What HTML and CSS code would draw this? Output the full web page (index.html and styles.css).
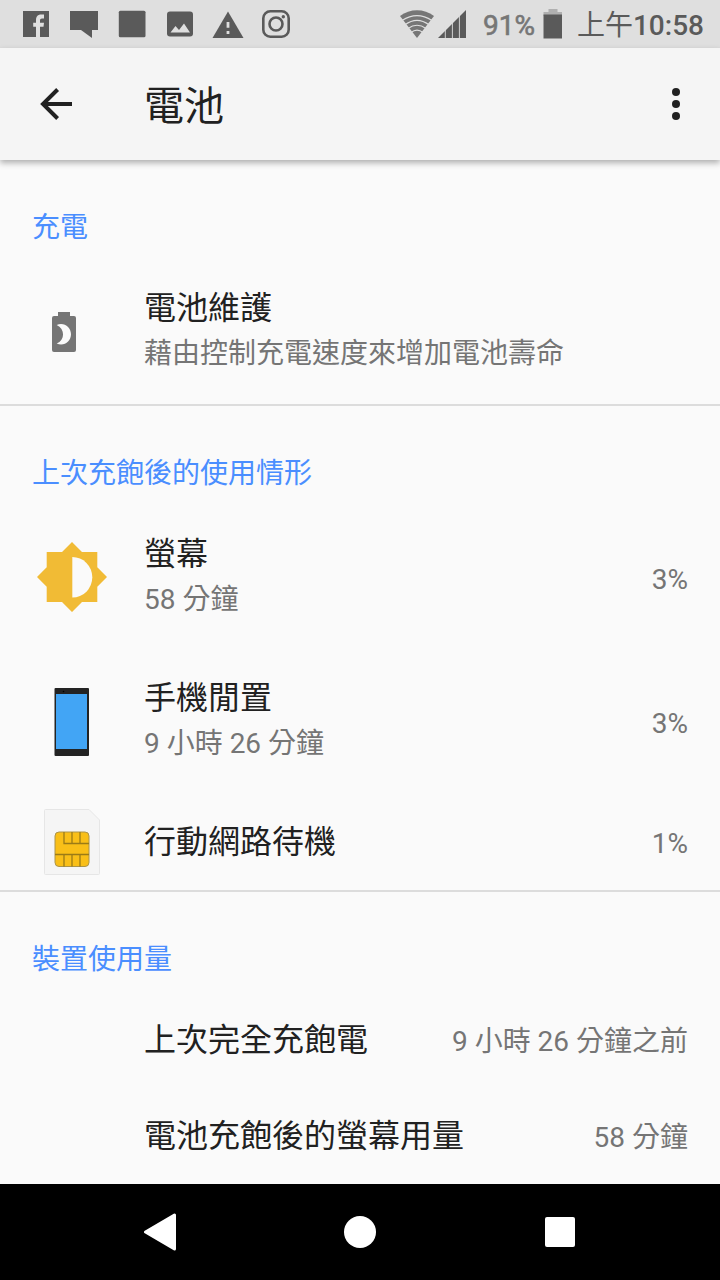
FILE: index.html
```
<!DOCTYPE html>
<html lang="zh-Hant">
<head>
<meta charset="utf-8">
<title>電池</title>
<link rel="stylesheet" href="styles.css">
</head>
<body>
<div class="screen">
  <div class="status">
    <div class="notifications">
      <svg width="28" height="28" viewBox="0 0 28 28"><path fill="#5a5a5a" d="M1 1h26v26H1z"/><path fill="#dfdfdf" d="M14 27V16.800H11.200V12.800H14V10C14 6.600 15.800 4.500 19 4.500H22V8.500H20C18.600 8.500 18 9.200 18 10.500V12.800H22L21.500 16.800H18V27z"/></svg>
      <svg width="28" height="28" viewBox="0 0 28 28"><path fill="#5a5a5a" d="M0 1h28v19h-6v8l-11-8H0z"/></svg>
      <svg width="28" height="28" viewBox="0 0 28 28"><rect x="0.800" y="0.700" width="26.700" height="26.500" rx="1.500" fill="#5a5a5a"/></svg>
      <svg width="28" height="28" viewBox="0 0 28 28"><rect x="1" y="1.500" width="26" height="25" rx="3" fill="#5a5a5a"/><path fill="#dfdfdf" d="M4.500 22.500l5-6.500 3.500 4 5-6.500 6 9z"/></svg>
      <svg width="32" height="28" viewBox="0 0 32 28"><path fill="#5a5a5a" d="M16 1.500L31.500 28H.5z"/><path fill="#dfdfdf" d="M14.600 12h2.800v5.800h-2.800zM14.600 21h2.800v3h-2.800z"/></svg>
      <svg width="28" height="28" viewBox="0 0 28 28"><g fill="none" stroke="#5a5a5a" stroke-width="2.600"><rect x="1.300" y="1.300" width="25.400" height="25.400" rx="7"/><circle cx="14" cy="14" r="6.500"/></g><circle cx="21.300" cy="6.700" r="1.700" fill="#5a5a5a"/></svg>
    </div>
    <div class="system">
      <svg class="wifi" width="34" height="28" viewBox="0 0 34 28"><path fill="#767676" d="M17 28L0 6C10-1.700 24-1.700 34 6z"/><g fill="none" stroke="#dfdfdf" stroke-width="1.100"><path d="M2 10.500Q17 .8 32 10.500M5 14.800Q17 6 29 14.800M8 18.500Q17 12 26 18.500M11 22.500Q17 17.700 23 22.500"/></g></svg>
      <svg class="signal" width="28" height="28" viewBox="0 0 28 28"><path fill="#5a5a5a" d="M28 0v28H0z"/><path stroke="#dfdfdf" stroke-width=".9" d="M7.300 15v13M14.400 10v18M21.400 5v23"/></svg>
      <span class="percent">91%</span>
      <svg class="level" width="20" height="30" viewBox="0 0 20 30"><path fill="#b0b0b0" d="M5.500 0h9v3H19v4H.500V3h5z"/><path fill="#5a5a5a" d="M.5 5.500H19V29.500H.5z"/></svg>
      <span class="clock">上午<b>10:58</b></span>
    </div>
  </div>

  <div class="appbar">
    <svg width="32" height="32" viewBox="0 0 32 32"><path fill="none" stroke="#212121" stroke-width="4" d="M32 16H3M17.600 1.500L3 16l14.600 14.500"/></svg>
    <h1 class="title">電池</h1>
    <svg width="8" height="32" viewBox="0 0 8 32"><g fill="#212121"><circle cx="4" cy="4" r="4"/><circle cx="4" cy="16" r="4"/><circle cx="4" cy="28" r="4"/></g></svg>
  </div>

  <div class="section">
    <h2 class="heading">充電</h2>
    <div class="row">
      <div class="icon icon-small"><svg width="24" height="40" viewBox="0 0 24 40"><path fill="#757575" d="M6 0h12v4h4a2 2 0 0 1 2 2v32a2 2 0 0 1-2 2H2a2 2 0 0 1-2-2V6a2 2 0 0 1 2-2h4z"/><path fill="#fafafa" d="M4.700 13C12 9.800 19 15.300 19 22.300S12 35 4.700 31.600C13.200 28 13.200 17 4.700 13z"/></svg></div>
      <div class="text"><div class="name">電池維護</div><div class="summary">藉由控制充電速度來增加電池壽命</div></div>
    </div>
  </div>

  <div class="section">
    <h2 class="heading">上次充飽後的使用情形</h2>
    <div class="row">
      <div class="icon icon-raised"><svg width="70" height="70" viewBox="0 0 70 70"><path fill="#f1bb35" d="M35 0l10 10h15.300v15.300L70 35l-9.700 9.700V60H45L35 70 25 60H9.700V44.700L0 35l9.700-9.700V10H25z"/><path fill="#fafafa" d="M35.300 15A20 20.300 0 0 1 35.300 55.600z"/></svg></div>
      <div class="text"><div class="name">螢幕</div><div class="summary">58 分鐘</div></div>
      <div class="value">3%</div>
    </div>
    <div class="row">
      <div class="icon"><svg width="36" height="68" viewBox="0 0 36 68"><rect x=".5" width="34.500" height="68" rx="1" fill="#232323"/><path fill="#42a5f5" d="M2 6h31v55H2z"/><circle cx="9.500" cy="3.500" r=".8" fill="#000"/></svg></div>
      <div class="text"><div class="name">手機閒置</div><div class="summary">9 小時 26 分鐘</div></div>
      <div class="value">3%</div>
    </div>
    <div class="row row-short">
      <div class="icon"><svg width="56" height="66" viewBox="0 0 56 66"><path fill="#f5f5f5" stroke="#e6e6e6" d="M1.500.5H45L55.500 11v53.500a1 1 0 0 1-1 1h-53a1 1 0 0 1-1-1v-63a1 1 0 0 1 1-1z"/><rect x="11" y="23" width="34" height="34.500" rx="4" fill="#f9bf18" stroke="#ab944c"/><path fill="none" stroke="#9b7b17" stroke-width="1.300" d="M20 23v11.500h25M28 23v11.500M36 23v11.500M11 45.500h34M20 45.500v12M28 45.500v12M36 45.500v12"/></svg></div>
      <div class="text"><div class="name">行動網路待機</div></div>
      <div class="value">1%</div>
    </div>
  </div>

  <div class="section">
    <h2 class="heading">裝置使用量</h2>
    <div class="row row-short">
      <div class="icon"></div>
      <div class="text"><div class="name">上次完全充飽電</div></div>
      <div class="value">9 小時 26 分鐘之前</div>
    </div>
    <div class="row row-short">
      <div class="icon"></div>
      <div class="text"><div class="name">電池充飽後的螢幕用量</div></div>
      <div class="value">58 分鐘</div>
    </div>
  </div>

  <div class="navbar">
    <svg width="32" height="38" viewBox="0 0 32 38"><path fill="#fff" stroke="#fff" stroke-width="3" stroke-linejoin="round" d="M30.500 2v34L1.500 19z"/></svg>
    <svg width="32" height="32" viewBox="0 0 32 32"><circle cx="16" cy="16" r="16" fill="#fff"/></svg>
    <svg width="32" height="30" viewBox="0 0 32 30"><rect x="1" width="30" height="30" rx="2" fill="#fff"/></svg>
  </div>
</div>
</body>
</html>
```
FILE: styles.css
```
body {
  margin: 0;
  font-family: Roboto, "Noto Sans CJK TC", sans-serif;
  color: #212121;
}
svg { display: block; flex: none; }
.screen {
  width: 720px;
  height: 1280px;
  display: flex;
  flex-direction: column;
  background: #fafafa;
  overflow: hidden;
}
.status {
  height: 48px;
  flex: none;
  display: flex;
  align-items: center;
  justify-content: space-between;
  background: #dfdfdf;
  padding: 0 16px 0 22px;
  box-sizing: border-box;
}
.notifications { display: flex; gap: 20px; align-items: center; }
.notifications svg:nth-child(5) { margin: 0 -2px; }
.system { display: flex; align-items: center; white-space: nowrap; }
.signal { margin-left: 4px; }
.percent, .clock { font-size: 28px; line-height: 44px; padding-top: 4px; }
.percent { color: #767676; margin-left: 17px; -webkit-text-stroke: .6px #767676; }
.level { margin-left: 8px; }
.clock { color: #5a5a5a; margin-left: 14px; }
.clock b { font-weight: 500; }
.appbar {
  height: 112px;
  flex: none;
  box-sizing: border-box;
  display: flex;
  align-items: center;
  padding: 0 40px;
  background: #f5f5f5;
  box-shadow: 0 3px 6px rgba(0, 0, 0, .3);
}
.title {
  flex: 1;
  margin: 0 0 0 72px;
  padding-top: 5px;
  font-size: 40px;
  font-weight: 400;
  line-height: 56px;
}
.section + .section { border-top: 2px solid #dcdcdc; }
.heading {
  margin: 0;
  height: 100px;
  box-sizing: border-box;
  padding: 34px 32px 0;
  font-size: 28px;
  font-weight: 400;
  line-height: 68px;
  color: #4a8eff;
}
.row {
  height: 144px;
  box-sizing: border-box;
  display: flex;
  align-items: center;
  padding-right: 32px;
}
.row-short { height: 96px; }
.icon { width: 144px; display: flex; justify-content: center; flex: none; }
.icon-small { box-sizing: border-box; padding-right: 16px; }
.icon-raised { padding-bottom: 2px; }
.text { flex: 1; }
.name { font-size: 32px; line-height: 46px; }
.row:not(.row-short) .text { padding-bottom: 4px; }
.row:not(.row-short) .name { padding-bottom: 1px; }
.summary { font-size: 28px; line-height: 44px; color: #757575; }
.value { font-size: 28px; line-height: 44px; padding-top: 4px; color: #757575; }
.navbar {
  height: 96px;
  flex: none;
  margin-top: auto;
  display: flex;
  align-items: center;
  justify-content: space-between;
  padding: 0 144px;
  background: #000;
}
```
